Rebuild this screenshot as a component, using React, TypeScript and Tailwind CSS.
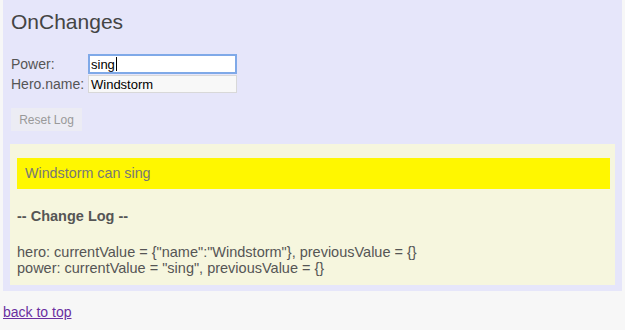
import React from "react";

export default function App() {
  return (
    <div className="min-h-[330px] bg-[#f7f7f7] font-['Liberation_Sans',Arial,sans-serif] text-[#555]">
      <div className="mx-[3px] bg-[#e6e6fa] px-[7px] pb-[6px] pt-[9px]">
        <h2 className="pl-[1px] text-[21px] leading-[26px] text-[#444]">OnChanges</h2>
        <div className="mt-[19px] grid grid-cols-[77px_149px] items-center gap-y-[1px] pl-[1px] text-[14px] leading-[17px]">
          <span className="text-[#555]">Power:</span>
          <div className="flex h-[20px] items-center border-2 border-[#7fa9e8] bg-white px-[1px] text-[13px] text-black">
            sing<span className="ml-[1px] inline-block h-[14px] w-[1px] bg-black" />
          </div>
          <span className="text-[#555]">Hero.name:</span>
          <div className="flex h-[18px] items-center border border-[#d8d8d8] bg-[#f8f8f8] px-[2px] text-[13px] text-black">
            Windstorm
          </div>
        </div>
        <button className="mt-[15px] ml-[1px] h-[23px] w-[71px] bg-[#ececf4] text-[12px] text-[#999]">
          Reset Log
        </button>
        <div className="mt-[13px] bg-[#f6f6de] pb-[9px] pl-[7px] pr-[5px] pt-[14px]">
          <div className="flex h-[31px] items-center bg-[#fff700] pl-[8px] text-[14.3px] text-[#777]">
            Windstorm can sing
          </div>
          <div className="mt-[19px] text-[14.5px] font-bold leading-[17px] text-[#555]">-- Change Log --</div>
          <div className="mt-[19px] text-[14.5px] leading-[16px] text-[#555]">
            <div>hero: currentValue = {'{"name":"Windstorm"}'}, previousValue = {"{}"}</div>
            <div>power: currentValue = "sing", previousValue = {"{}"}</div>
          </div>
        </div>
      </div>
      <a href="#" className="ml-[3px] mt-[11px] inline-block text-[14px] text-[#6a2fa0] underline">
        back to top
      </a>
    </div>
  );
}
